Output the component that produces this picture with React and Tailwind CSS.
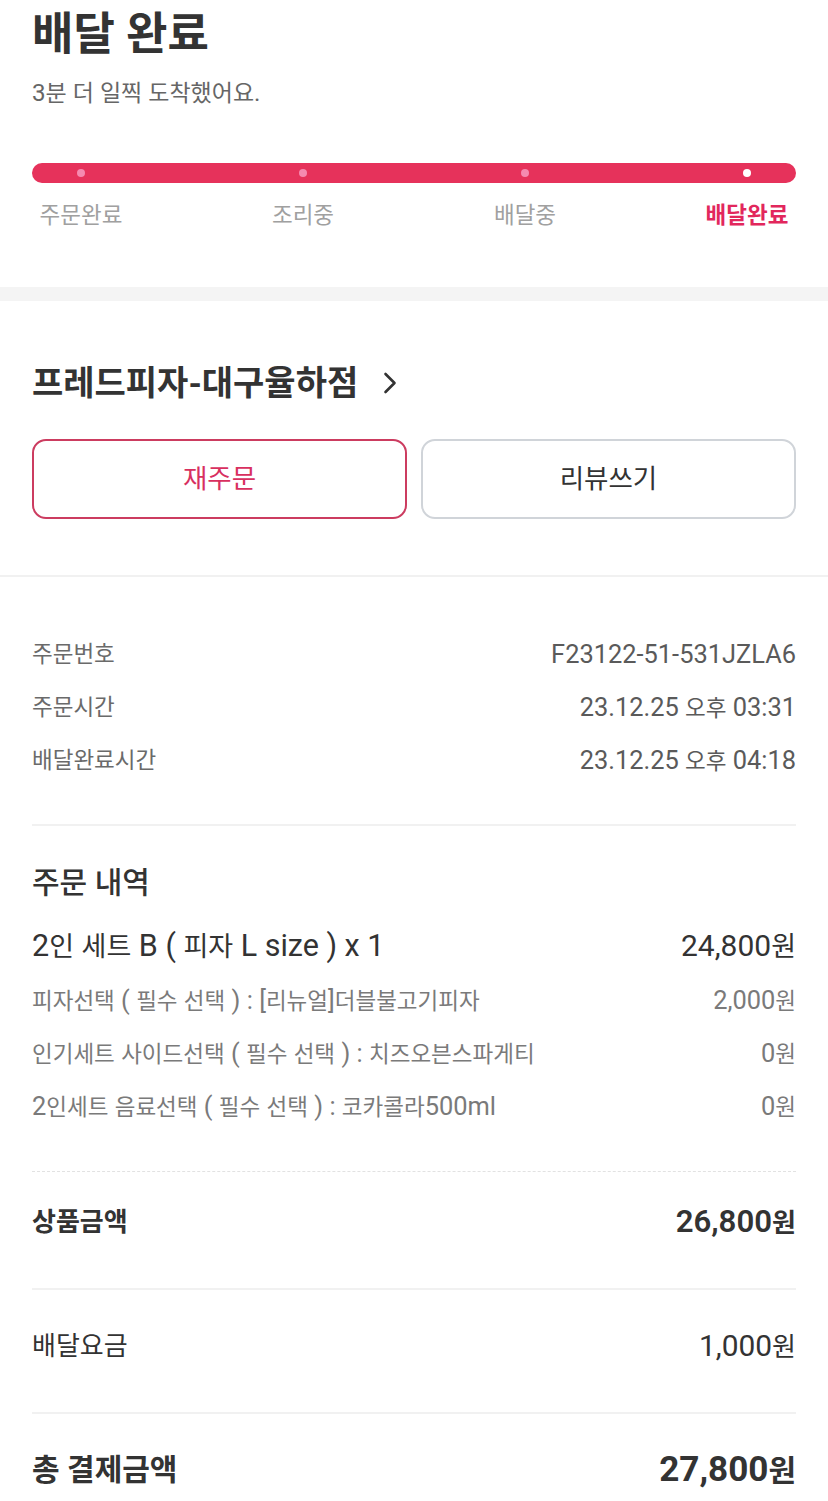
import React from "react";

function T({ s, big = "text-[1.13em]" }) {
  const parts = s.split(/([\uAC00-\uD7A3]+)/).filter((p) => p !== "");
  return parts.map((p, i) =>
    /[\uAC00-\uD7A3]/.test(p) ? (
      <React.Fragment key={i}>{p}</React.Fragment>
    ) : (
      <span key={i} className={big}>
        {p}
      </span>
    )
  );
}

function Dot({ white }) {
  return (
    <div className="w-[90px] flex justify-center">
      <div
        className={
          white
            ? "w-[8px] h-[8px] rounded-full bg-white"
            : "w-[8px] h-[8px] rounded-full bg-[#f58ab0]"
        }
      />
    </div>
  );
}

function Label({ text, active }) {
  return (
    <div
      className={
        active
          ? "w-[90px] text-center text-[22.5px] leading-[28px] font-bold text-[#e2275c] whitespace-nowrap"
          : "w-[90px] text-center text-[22.5px] leading-[28px] text-[#a0a0a0] whitespace-nowrap"
      }
    >
      {text}
    </div>
  );
}

function InfoRow({ label, value }) {
  return (
    <div className="flex justify-between items-center h-[53px] text-[22.5px] leading-[53px]">
      <span className="text-[#6a6a6a]">{label}</span>
      <span className="text-[#5a5a5a]">
        <T s={value} />
      </span>
    </div>
  );
}

function OptionRow({ label, value }) {
  return (
    <div className="flex justify-between items-center h-[53px] text-[22.5px] leading-[53px] text-[#7a7a7a]">
      <span>
        <T s={label} />
      </span>
      <span>
        <T s={value} />
      </span>
    </div>
  );
}

export default function App() {
  return (
    <div className="w-[828px] min-h-[1501px] bg-white font-['Roboto','Noto_Sans_CJK_KR',sans-serif] text-[#333]">
      {/* Header */}
      <div className="px-[32px] pt-[9px] pb-[58px]">
        <h1 className="text-[45px] leading-[52px] font-bold text-[#333]">
          배달 완료
        </h1>
        <p className="mt-[17px] text-[23px] leading-[30px] text-[#666]">
          <T s="3분 더 일찍 도착했어요." big="text-[1.05em]" />
        </p>
        <div className="mt-[54px] h-[20px] rounded-full bg-[#e6325b] flex items-center justify-between px-[4px]">
          <Dot />
          <Dot />
          <Dot />
          <Dot white />
        </div>
        <div className="mt-[18px] flex justify-between px-[4px]">
          <Label text="주문완료" />
          <Label text="조리중" />
          <Label text="배달중" />
          <Label text="배달완료" active />
        </div>
      </div>

      <div className="h-[14px] bg-[#f4f4f4]" />

      {/* Store */}
      <div className="px-[32px] pt-[60px] pb-[56px]">
        <div className="flex items-center gap-[24px] h-[44px]">
          <span className="text-[34px] leading-[44px] font-bold text-[#333]">
            <T s="프레드피자-대구율하점" big="text-[1em]" />
          </span>
          <svg width="16" height="24" viewBox="0 0 16 24" fill="none">
            <path
              d="M3.5 3 L12.5 12 L3.5 21"
              stroke="#333"
              strokeWidth="2.6"
              strokeLinecap="round"
              strokeLinejoin="round"
            />
          </svg>
        </div>
        <div className="mt-[34px] flex gap-[14px]">
          <button className="flex-1 h-[80px] rounded-[14px] border-2 border-[#cc3c60] text-[26.5px] text-[#d8305f] bg-white">
            재주문
          </button>
          <button className="flex-1 h-[80px] rounded-[14px] border-2 border-[#d0d4d9] text-[26.5px] text-[#333] bg-white">
            리뷰쓰기
          </button>
        </div>
      </div>

      <div className="h-[2px] bg-[#f1f1f1]" />

      {/* Order info */}
      <div className="px-[32px] pt-[51px]">
        <InfoRow label="주문번호" value="F23122-51-531JZLA6" />
        <InfoRow label="주문시간" value="23.12.25 오후 03:31" />
        <InfoRow label="배달완료시간" value="23.12.25 오후 04:18" />

        <div className="mt-[37px] h-[2px] bg-[#f1f1f1]" />

        <h2 className="mt-[37px] text-[30px] leading-[40px] font-medium text-[#333]">
          주문 내역
        </h2>
        <div className="mt-[23px] flex justify-between items-center h-[40px] text-[27px] leading-[40px] text-[#333]">
          <span>
            <T s="2인 세트 B ( 피자 L size ) x 1" big="text-[1.13em]" />
          </span>
          <span>
            <T s="24,800원" big="text-[1.11em]" />
          </span>
        </div>
        <div className="mt-[8px]">
          <OptionRow label="피자선택 ( 필수 선택 ) : [리뉴얼]더블불고기피자" value="2,000원" />
          <OptionRow label="인기세트 사이드선택 ( 필수 선택 ) : 치즈오븐스파게티" value="0원" />
          <OptionRow label="2인세트 음료선택 ( 필수 선택 ) : 코카콜라500ml" value="0원" />
        </div>

        <div className="mt-[38px] border-t border-dashed border-[#e2e2e2]" />

        <div className="mt-[30px] flex justify-between items-center h-[40px] text-[26px] leading-[40px] font-semibold text-[#333]">
          <span>상품금액</span>
          <span>
            <T s="26,800원" big="text-[1.2em]" />
          </span>
        </div>

        <div className="mt-[46px] h-[2px] bg-[#f1f1f1]" />

        <div className="mt-[36px] flex justify-between items-center h-[40px] text-[26px] leading-[40px] text-[#333]">
          <span>배달요금</span>
          <span>
            <T s="1,000원" big="text-[1.15em]" />
          </span>
        </div>

        <div className="mt-[46px] h-[2px] bg-[#f1f1f1]" />

        <div className="mt-[36px] flex justify-between items-center h-[40px] text-[30px] leading-[40px] font-bold text-[#333]">
          <span>총 결제금액</span>
          <span>
            <T s="27,800원" big="text-[1.17em]" />
          </span>
        </div>
      </div>
    </div>
  );
}
